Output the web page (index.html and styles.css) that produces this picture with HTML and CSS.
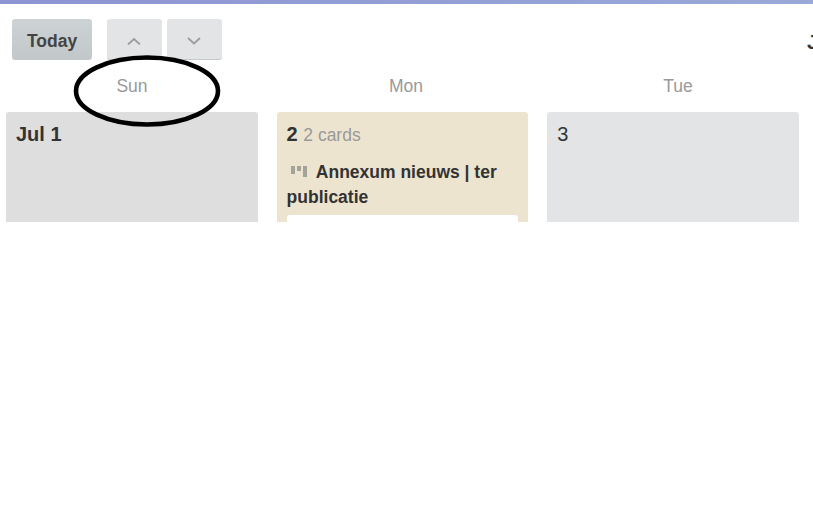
FILE: index.html
```html
<!DOCTYPE html>
<html lang="en">
    <head>
        <meta charset="UTF-8">
        <title>Calendar</title>
        <link rel="stylesheet" href="styles.css">
    </head>
    <body>
        <div class="topbar"></div>

        <div class="toolbar">
            <button class="btn today">Today</button>
            <div class="arrows">
                <button class="btn arrow">
                    <svg width="14" height="8" viewBox="0 0 14 8"><path d="M1 7.5 L7 2 L13 7.5" fill="none" stroke="#9a9ea1" stroke-width="1.8"/></svg>
                </button>
                <button class="btn arrow">
                    <svg width="14" height="8" viewBox="0 0 14 8"><path d="M1 1 L7 6.5 L13 1" fill="none" stroke="#9a9ea1" stroke-width="1.8"/></svg>
                </button>
            </div>
            <div class="month">July 2018</div>
        </div>

        <div class="weekdays">
            <div class="weekday">Sun</div>
            <div class="weekday">Mon</div>
            <div class="weekday">Tue</div>
        </div>

        <div class="days">
            <div class="day other">
                <div class="day-head"><b>Jul 1</b></div>
            </div>
            <div class="day busy">
                <div class="day-head"><b>2</b> <span class="count">2 cards</span></div>
                <div class="list-title">
                    <svg class="board-icon" width="16" height="11" viewBox="0 0 16 11"><path d="M0 0h4v8H0zM6 0h4v5H6zM12 0h4v11h-4z" fill="#a3a29b"/></svg>
                    Annexum nieuws | ter publicatie
                </div>
                <div class="card"></div>
            </div>
            <div class="day">
                <div class="day-head plain">3</div>
            </div>
        </div>

        <!-- hand drawn circle on top of the screenshot -->
        <svg class="scribble" width="160" height="80" viewBox="0 0 160 80">
            <ellipse cx="80" cy="40" rx="71" ry="33.5" fill="none" stroke="#000" stroke-width="4.6"/>
        </svg>
    </body>
</html>
```

FILE: styles.css
```css
html, body{
    margin: 0;
    height: 100%;
    overflow: hidden;
    background: #fff;
}
body{
    position: relative;
    font-family: "Liberation Sans", Arial, sans-serif;
    color: #333;
}
.topbar{
    height: 4px;
    background: linear-gradient(90deg, #8c94d2, #9ba8d8);
}
.toolbar{
    display: flex;
    align-items: flex-start;
    padding: 15px 0 0 12px;
    height: 41px;
    white-space: nowrap;
}
.btn{
    flex: none;
    border: none;
    border-radius: 3px;
    padding: 0;
    font-family: inherit;
    cursor: pointer;
    background: #e2e4e6;
    box-shadow: 0 1px 0 #c4c9cc;
}
.today{
    width: 80px;
    height: 40px;
    padding-top: 4px;
    background: linear-gradient(180deg, #cdd2d4, #c2c7ca);
    color: #444;
    font-size: 17.5px;
    font-weight: bold;
}
.arrows{
    flex: none;
    display: flex;
    gap: 5px;
    margin-left: 15px;
}
.arrow{
    width: 55px;
    height: 40px;
    padding: 4px 2px 0 0;
    display: flex;
    align-items: center;
    justify-content: center;
}
.month{
    flex: none;
    margin-left: 585px;
    font-size: 20px;
    font-weight: bold;
    line-height: 46px;
}
.weekdays{
    display: flex;
    gap: 21px;
    padding: 15px 0 0 6px;
    height: 41px;
    box-sizing: border-box;
}
.weekday{
    flex: none;
    width: 252px;
    box-sizing: border-box;
    text-align: center;
    font-size: 17.5px;
    line-height: 22px;
    color: #999;
}
.weekday:nth-child(2){
    padding-left: 2px;
}
.days{
    display: flex;
    gap: 19px;
    padding: 0 6px;
    margin-top: 11px;
}
.day{
    flex: none;
    width: 251.6px;
    height: 110px;
    box-sizing: border-box;
    padding: 10px;
    overflow: hidden;
    border-radius: 3px 3px 0 0;
    background: #e2e4e6;
    font-size: 17.5px;
    line-height: 25px;
}
.other{
    background: #dedede;
}
.busy{
    background: #ede4cf;
}
.day-head{
    height: 28px;
    font-size: 20px;
}
.count{
    color: #999;
    font-size: 17.5px;
}
.list-title{
    margin-top: 10px;
    font-weight: bold;
}
.board-icon{
    margin: 0 5px 0 4px;
    vertical-align: 1px;
}
.card{
    height: 40px;
    margin-top: 5px;
    background: #fff;
    border-radius: 3px;
}
.scribble{
    position: absolute;
    left: 67px;
    top: 51px;
}
```
